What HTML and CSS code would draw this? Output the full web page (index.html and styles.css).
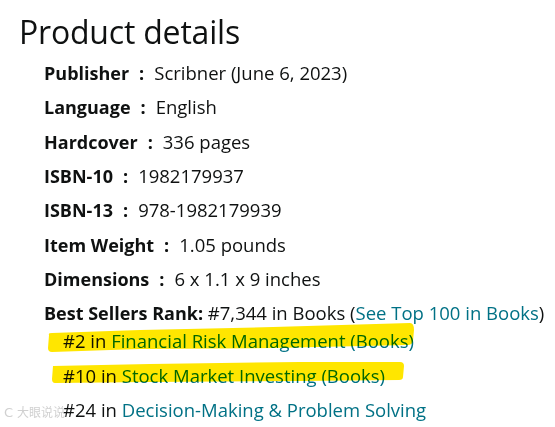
FILE: index.html
```html
<!DOCTYPE html>
<html lang="en">
<head>
<meta charset="utf-8">
<title>Product details</title>
<link rel="stylesheet" href="styles.css">
</head>
<body>
<div class="page">
  <h2 class="title">Product details</h2>
  <ul class="details">
    <li><span class="label">Publisher</span><span class="sep">:</span><span>Scribner (June 6, 2023)</span></li>
    <li><span class="label">Language</span><span class="sep">:</span><span>English</span></li>
    <li><span class="label">Hardcover</span><span class="sep">:</span><span>336 pages</span></li>
    <li><span class="label">ISBN-10</span><span class="sep">:</span><span>1982179937</span></li>
    <li><span class="label">ISBN-13</span><span class="sep">:</span><span>978-1982179939</span></li>
    <li><span class="label">Item Weight</span><span class="sep">:</span><span>1.05 pounds</span></li>
    <li><span class="label">Dimensions</span><span class="sep">:</span><span>6 x 1.1 x 9 inches</span></li>
    <li class="rank"><span class="label">Best Sellers Rank:</span> #7,344 in Books (<a href="#">See Top 100 in Books</a>)
      <ul class="sub">
        <li>#2 in <a href="#">Financial Risk Management (Books)</a></li>
        <li>#10 in <a href="#">Stock Market Investing (Books)</a></li>
        <li>#24 in <a href="#">Decision-Making &amp; Problem Solving</a></li>
      </ul>
    </li>
  </ul>
  <svg class="marker" width="555" height="427" viewBox="0 0 555 427" aria-hidden="true">
    <path d="M49 335 Q48 333 52 333 L140 330 L273 327 L410 323 Q414 323 414 330 L413 341 Q412 345 408 345 L273 348 L140 349 L52 352 Q48 352 48 348 Z" fill="#ffe600"/>
    <path d="M53 366 L150 364 L300 362 L400 362 Q404 362 404 366 L403 377 Q403 380 399 380 L300 381 L150 382 L55 383 Q52 383 52 379 Z" fill="#ffe600"/>
  </svg>
  <div class="watermark"><span class="wm-icon">C</span>大眼说说</div>
</div>
</body>
</html>
```

FILE: styles.css
```css
html, body {
  margin: 0;
  padding: 0;
  background: #ffffff;
}

.page {
  position: relative;
  width: 555px;
  height: 427px;
  overflow: hidden;
  font-family: "Open Sans", "Liberation Sans", sans-serif;
  color: #0f1111;
}

.title {
  margin: 0;
  padding: 12px 0 0 19px;
  font-size: 32px;
  font-weight: 400;
  line-height: 40px;
  letter-spacing: -0.2px;
}

.details {
  list-style: none;
  margin: 0;
  padding: 10px 0 0 44px;
  font-size: 18.5px;
  line-height: 22px;
}

.details > li {
  margin-bottom: 12.33px;
  white-space: nowrap;
}

.label {
  font-weight: 700;
  font-size: 18px;
}

.sep {
  font-weight: 700;
  font-size: 18px;
  margin: 0 10px 0 10px;
}

.details a {
  color: #007185;
  text-decoration: none;
}

.sub {
  list-style: none;
  margin: 6px 0 0 0;
  padding: 0 0 0 19px;
}

.sub li {
  margin-bottom: 12.33px;
}

.marker {
  position: absolute;
  left: 0;
  top: 0;
  mix-blend-mode: multiply;
  pointer-events: none;
}

.watermark {
  position: absolute;
  left: 4px;
  top: 404px;
  font-family: "Noto Sans CJK SC", sans-serif;
  font-size: 12px;
  line-height: 16px;
  color: #d0d0d0;
  text-shadow: 0 0 1px #ffffff;
}

.wm-icon {
  font-family: "DejaVu Sans", sans-serif;
  font-size: 13px;
  margin-right: 4px;
}
```
